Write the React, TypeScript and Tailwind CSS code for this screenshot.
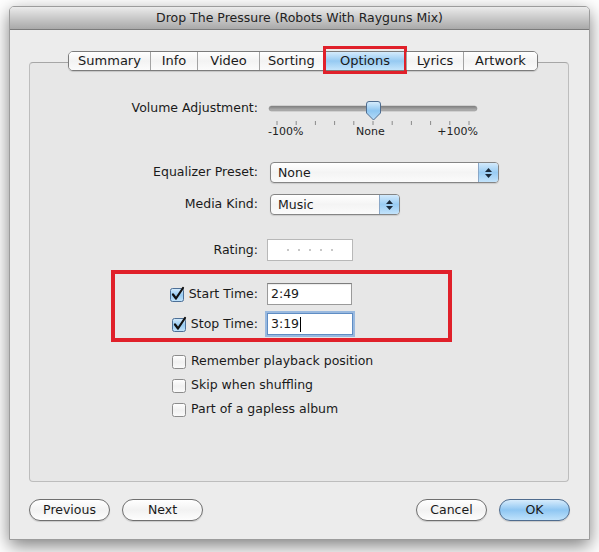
import type { ReactNode } from 'react';

const tabs = [
  { label: 'Summary', w: 'w-[81px]' },
  { label: 'Info', w: 'w-[47px]' },
  { label: 'Video', w: 'w-[62px]' },
  { label: 'Sorting', w: 'w-[64px]' },
  { label: 'Options', w: 'w-[83px]' },
  { label: 'Lyrics', w: 'w-[57px]' },
  { label: 'Artwork', w: 'w-[74px]' },
];

const ticks = Array.from({ length: 11 }, (_, i) => 10 + i * 19.2);

function CheckBox({ checked }: { checked?: boolean }) {
  return (
    <svg width="16" height="16" viewBox="0 0 16 16" className="shrink-0">
      <defs>
        <linearGradient id={checked ? 'cbOn' : 'cbOff'} x1="0" y1="0" x2="0" y2="1">
          {checked ? (
            <>
              <stop offset="0" stopColor="#d7ecfc" />
              <stop offset="0.5" stopColor="#97cbf2" />
              <stop offset="1" stopColor="#c4e4fb" />
            </>
          ) : (
            <>
              <stop offset="0" stopColor="#ffffff" />
              <stop offset="0.5" stopColor="#f1f1f1" />
              <stop offset="1" stopColor="#fafafa" />
            </>
          )}
        </linearGradient>
      </defs>
      <rect x="1.5" y="2.5" width="13" height="13" rx="2" fill={`url(#${checked ? 'cbOn' : 'cbOff'})`} stroke={checked ? '#4d6f96' : '#8c8c8c'} />
      {checked ? <path d="M4 8.5 L7 12.5 L14 2" fill="none" stroke="#111" strokeWidth="2.2" strokeLinecap="round" strokeLinejoin="round" /> : null}
    </svg>
  );
}

function Popup({ value, width }: { value: string; width: string }) {
  return (
    <div className={`${width} flex h-[21px] overflow-hidden rounded-[4px] border border-[#858585] bg-gradient-to-b from-white via-[#f4f4f4] to-[#fbfbfb] shadow-[0_1px_1px_rgba(0,0,0,0.12)]`}>
      <span className="flex-1 pl-[7px] leading-[19px]">{value}</span>
      <span className="flex w-[20px] flex-col items-center justify-center gap-[2px] border-l border-[#8aa7c7] bg-gradient-to-b from-[#d3eafc] via-[#99ccf3] to-[#c3e3fb]">
        <svg width="7" height="4" viewBox="0 0 7 4">
          <path d="M0 4 L3.5 0 L7 4 Z" fill="#1b2a3a" />
        </svg>
        <svg width="7" height="4" viewBox="0 0 7 4">
          <path d="M0 0 L3.5 4 L7 0 Z" fill="#1b2a3a" />
        </svg>
      </span>
    </div>
  );
}

function Field({ children, focused }: { children: ReactNode; focused?: boolean }) {
  return (
    <div
      className={
        focused
          ? 'flex h-[22px] w-[86px] items-center border border-[#5f8dc4] bg-white pl-[3px] shadow-[0_0_0_2px_rgba(120,165,220,0.7)]'
          : 'flex h-[22px] w-[85px] items-center border border-[#9a9a9a] border-t-[#7d7d7d] bg-white pl-[3px] shadow-[inset_0_1px_1px_rgba(0,0,0,0.08)]'
      }
    >
      {children}
    </div>
  );
}

function Button({ label, width, primary }: { label: string; width: string; primary?: boolean }) {
  return (
    <button
      type="button"
      className={`${width} h-[22px] rounded-full border text-center leading-[20px] shadow-[0_1px_1px_rgba(0,0,0,0.15)] ${
        primary
          ? 'border-[#4f6c8e] bg-gradient-to-b from-[#d7ecfc] via-[#8ec6f2] to-[#bfe2fb]'
          : 'border-[#6f6f6f] bg-gradient-to-b from-white via-[#f2f2f2] to-[#fdfdfd]'
      }`}
    >
      {label}
    </button>
  );
}

export default function App() {
  return (
    <div className="h-[552px] w-[599px] bg-white pl-[9px] pt-[6px] font-['DejaVu_Sans','Liberation_Sans',sans-serif] text-[12.5px] text-[#1a1a1a]">
      <div className="flex h-[534px] w-[581px] flex-col overflow-hidden rounded-t-[5px] border border-[#9c9c9c] bg-[#ececec] shadow-[0_6px_18px_rgba(0,0,0,0.5)]">
        <div className="h-[23px] shrink-0 border-b border-[#7b7b7b] bg-gradient-to-b from-[#ebebeb] to-[#a9a9a9] text-center text-[12.5px] leading-[22px] text-[#222]">
          Drop The Pressure (Robots With Rayguns Mix)
        </div>

        <div className="flex flex-1 flex-col px-[19px] pt-[21px]">
          <div className="relative z-10 flex h-[20px] pl-[39px]">
            <div className="flex overflow-visible rounded-[5px] border border-[#7c7c7c] shadow-[0_1px_1px_rgba(0,0,0,0.15)]">
              {tabs.map((tab, i) => {
                const active = tab.label === 'Options';
                return (
                  <div
                    key={tab.label}
                    className={`relative ${tab.w} text-center text-[13px] leading-[18px] ${i > 0 ? 'border-l border-[#a3a3a3]' : ''} ${
                      i === 0 ? 'rounded-l-[4px]' : ''
                    } ${i === tabs.length - 1 ? 'rounded-r-[4px]' : ''} ${
                      active
                        ? 'bg-gradient-to-b from-[#d4ebfc] via-[#96caf2] to-[#c5e5fb]'
                        : 'bg-gradient-to-b from-white via-[#f3f3f3] to-[#fbfbfb]'
                    }`}
                  >
                    {tab.label}
                    {active ? <div className="absolute -bottom-[4px] -left-[1px] -right-[1px] -top-[6px] border-[3px] border-[#e0202a]" /> : null}
                  </div>
                );
              })}
            </div>
          </div>

          <div className="-mt-[9px] flex h-[420px] w-[540px] flex-col rounded-[4px] border border-[#bdbdbd] border-t-[#a6a6a6] bg-[#e7e7e7] pt-[35px]">
            {/* volume */}
            <div className="flex items-start">
              <div className="w-[228px] text-right leading-[20px]">Volume Adjustment:</div>
              <div className="ml-[9px] flex w-[212px] flex-col">
                <svg width="212" height="28" viewBox="0 0 212 28">
                  <defs>
                    <linearGradient id="track" x1="0" y1="0" x2="0" y2="1">
                      <stop offset="0" stopColor="#7d7d7d" />
                      <stop offset="1" stopColor="#b9b9b9" />
                    </linearGradient>
                    <linearGradient id="thumb" x1="0" y1="0" x2="0" y2="1">
                      <stop offset="0" stopColor="#d9eefd" />
                      <stop offset="0.5" stopColor="#8ec6f1" />
                      <stop offset="1" stopColor="#b7dcf8" />
                    </linearGradient>
                  </defs>
                  <rect x="2" y="8" width="208" height="5" rx="2.5" fill="url(#track)" stroke="#8a8a8a" strokeWidth="0.5" />
                  {ticks.map((x) => (
                    <line key={x} x1={x} y1="23" x2={x} y2="27" stroke="#8a8a8a" strokeWidth="1" />
                  ))}
                  <path d="M99.5 6 Q99.5 3.5 102 3.5 L111 3.5 Q113.5 3.5 113.5 6 L113.5 15 L106.5 22 L99.5 15 Z" fill="url(#thumb)" stroke="#4f6d90" strokeWidth="1" />
                </svg>
                <div className="flex h-[12px] justify-between px-[1px] text-[11px] leading-[12px] text-[#222]">
                  <span>-100%</span>
                  <span>None</span>
                  <span>+100%</span>
                </div>
              </div>
            </div>

            <div className="mt-[24px] flex items-center">
              <div className="w-[228px] text-right">Equalizer Preset:</div>
              <div className="ml-[12px]">
                <Popup value="None" width="w-[229px]" />
              </div>
            </div>

            <div className="mt-[11px] flex items-center">
              <div className="w-[228px] text-right">Media Kind:</div>
              <div className="ml-[12px]">
                <Popup value="Music" width="w-[130px]" />
              </div>
            </div>

            <div className="mt-[24px] flex items-center">
              <div className="w-[228px] text-right">Rating:</div>
              <div className="ml-[9px] flex h-[22px] w-[86px] items-center justify-center gap-[9px] border border-[#b8b8b8] bg-white">
                {[0, 1, 2, 3, 4].map((d) => (
                  <span key={d} className="h-[2px] w-[2px] rounded-full bg-[#b5b5b5]" />
                ))}
              </div>
            </div>

            <div className="ml-[81px] mt-[9px] flex w-[341px] flex-col border-[4px] border-[#e0202a] pb-[3px] pt-[9px]">
              <div className="flex items-center">
                <div className="flex w-[143px] items-center justify-end gap-[4px]">
                  <CheckBox checked />
                  <span>Start Time:</span>
                </div>
                <div className="ml-[9px]">
                  <Field>2:49</Field>
                </div>
              </div>
              <div className="mt-[8px] flex items-center">
                <div className="flex w-[143px] items-center justify-end gap-[4px]">
                  <CheckBox checked />
                  <span>Stop Time:</span>
                </div>
                <div className="ml-[9px]">
                  <Field focused>
                    3:19
                    <span className="ml-[1px] h-[15px] w-px bg-black" />
                  </Field>
                </div>
              </div>
            </div>

            <div className="ml-[141px] mt-[10px] flex flex-col gap-[6px]">
              {['Remember playback position', 'Skip when shuffling', 'Part of a gapless album'].map((label) => (
                <div key={label} className="flex h-[18px] items-center gap-[4px]">
                  <CheckBox />
                  <span>{label}</span>
                </div>
              ))}
            </div>
          </div>

          <div className="mt-[17px] flex gap-[12px]">
            <Button label="Previous" width="w-[81px]" />
            <Button label="Next" width="w-[81px]" />
            <div className="flex-1" />
            <Button label="Cancel" width="w-[71px]" />
            <Button label="OK" width="w-[71px]" primary />
          </div>
        </div>
      </div>
    </div>
  );
}
